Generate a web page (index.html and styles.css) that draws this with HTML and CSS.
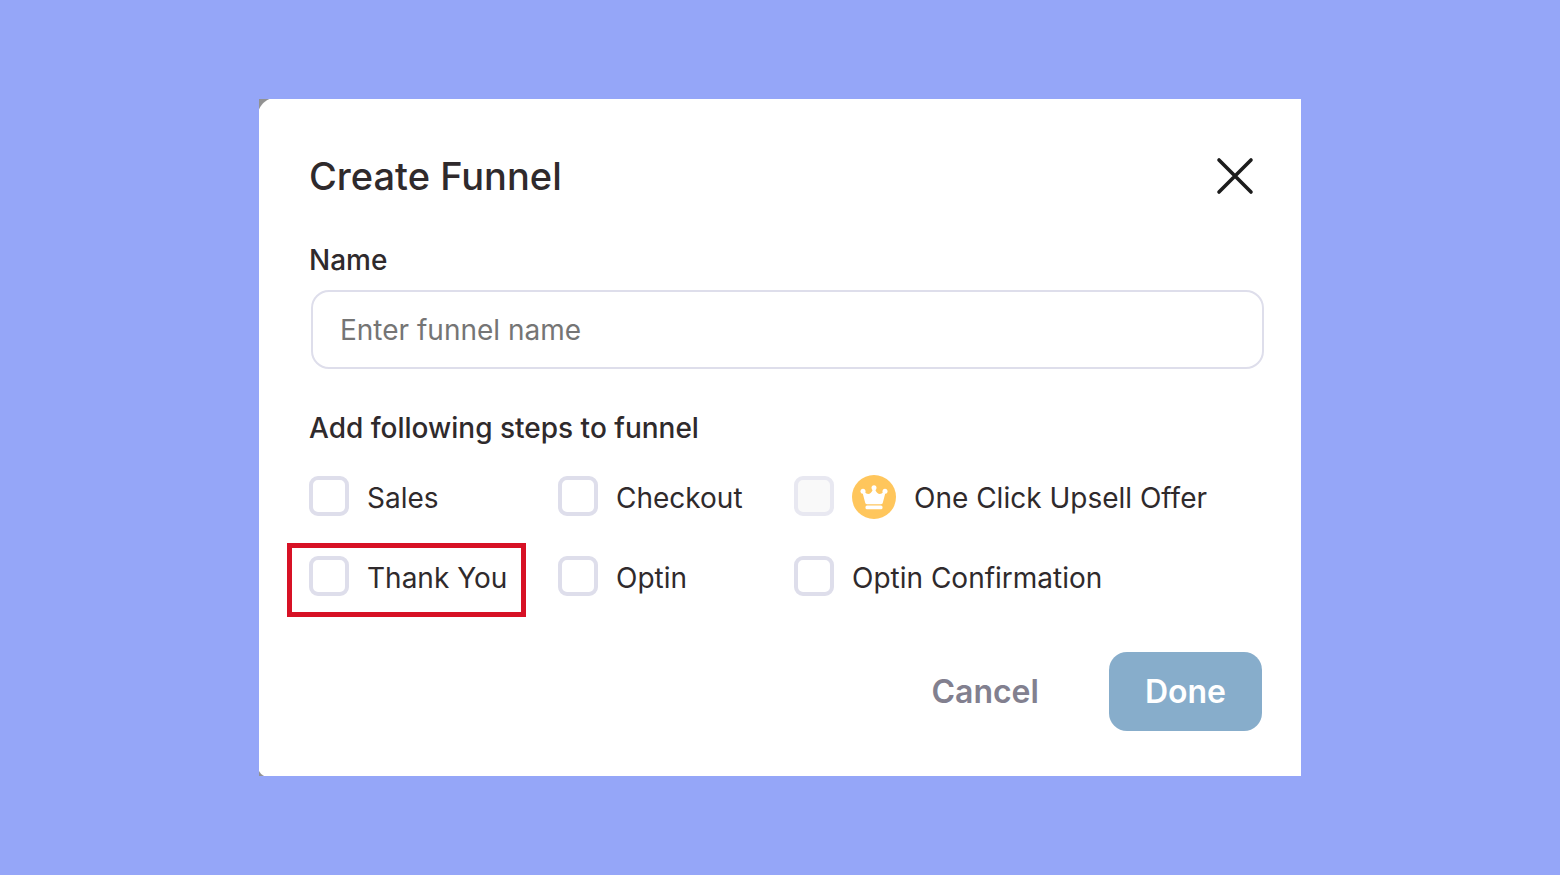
FILE: index.html
```html
<!DOCTYPE html>
<html lang="en">
<head>
  <meta charset="UTF-8" />
  <meta name="viewport" content="width=device-width, initial-scale=1.0" />
  <title>Create Funnel</title>
  <link rel="stylesheet" href="styles.css">
</head>
<body>
  <div class="backdrop">
    <form class="modal" role="dialog" aria-labelledby="modalTitle">
      <header class="modal-header">
        <h1 id="modalTitle">Create Funnel</h1>
        <button class="close" type="button" aria-label="Close">
          <svg width="38" height="38" viewBox="0 0 38 38" fill="none" stroke="currentColor" stroke-width="3.6" stroke-linecap="round">
            <path d="M3 3L35 35M35 3L3 35" />
          </svg>
        </button>
      </header>

      <label class="field-label" for="funnelName">Name</label>
      <input class="text-input" id="funnelName" type="text" placeholder="Enter funnel name">

      <fieldset class="steps">
        <legend class="field-label">Add following steps to funnel</legend>
        <div class="steps-grid">
          <label class="step"><input type="checkbox" name="sales">Sales</label>
          <label class="step"><input type="checkbox" name="checkout">Checkout</label>
          <label class="step">
            <input type="checkbox" name="upsell" disabled>
            <svg class="crown" width="44" height="44" viewBox="0 0 44 44">
              <circle cx="22" cy="22" r="22" fill="#ffc65c" />
              <g fill="#fff">
                <circle cx="11" cy="16.3" r="2.5" />
                <circle cx="22" cy="12.7" r="2.5" />
                <circle cx="33" cy="16.3" r="2.5" />
                <path d="M10.5 17.5L12.8 17C14.2 19.2 17 19.6 18.6 18C20 16.6 20.7 15.6 20.7 14H23.3C23.3 15.6 24 16.6 25.4 18C27 19.6 29.8 19.2 31.2 17L33.5 17.5L30.8 27.8C30.5 28.8 30 29.2 29 29.2H15C14 29.2 13.5 28.8 13.2 27.8Z" />
                <rect x="13.5" y="30.6" width="17" height="3.6" rx="1.5" />
              </g>
            </svg>
            One Click Upsell Offer
          </label>
          <label class="step highlighted"><input type="checkbox" name="thankyou">Thank You</label>
          <label class="step"><input type="checkbox" name="optin">Optin</label>
          <label class="step"><input type="checkbox" name="optinconfirmation">Optin Confirmation</label>
        </div>
      </fieldset>

      <footer class="modal-footer">
        <button class="btn btn-cancel" type="button">Cancel</button>
        <button class="btn btn-done" type="button">Done</button>
      </footer>
    </form>
  </div>
</body>
</html>
```
FILE: styles.css
```css
* {
  box-sizing: border-box;
}
body {
  margin: 0;
  font-family: Inter, "Liberation Sans", sans-serif;
  color: #2f2a2c;
  background: #95a6f8;
}
.backdrop {
  min-height: 100vh;
  display: flex;
  align-items: center;
  justify-content: center;
}
.modal {
  width: 100%;
  max-width: 1042px;
  padding: 53px 37px 45px 50px;
  /* grey shows behind the two rounded corners on the left */
  background:
    radial-gradient(circle at 100% 100%, #fff 19px, #929292 20px) 0 0 / 18px 18px no-repeat,
    radial-gradient(circle at 100% 0, #fff 12px, #929292 13px) 0 100% / 11px 11px no-repeat,
    #fff;
}
.modal-header {
  display: flex;
  align-items: center;
  justify-content: space-between;
  padding-right: 10px;
}
h1 {
  margin: 0;
  font-size: 38px;
  font-weight: 500;
  line-height: 48px;
}
.close {
  display: flex;
  padding: 0;
  border: none;
  background: none;
  color: #1c1c1c;
  cursor: pointer;
}
.field-label {
  display: block;
  padding: 0;
  font-size: 28px;
  font-weight: 500;
  line-height: 36px;
}
.modal-header + .field-label {
  margin-top: 42px;
}
.text-input {
  display: block;
  width: calc(100% - 2px);
  height: 79px;
  margin: 12px 0 0 2px;
  padding: 0 27px;
  border: 2px solid #dedeeb;
  border-radius: 18px;
  font: inherit;
  font-size: 28px;
  color: inherit;
}
.text-input::placeholder {
  color: #757575;
}
.steps {
  margin: 41px 0 0;
  padding: 0;
  border: none;
}
.steps-grid {
  display: grid;
  grid-template-columns: 249px 236px 1fr;
  row-gap: 36px;
  padding-top: 30px;
}
.step {
  position: relative;
  display: flex;
  align-items: center;
  justify-self: start;
  gap: 18px;
  height: 44px;
  font-size: 28px;
  white-space: nowrap;
}
.step input {
  appearance: none;
  flex: none;
  width: 40px;
  height: 40px;
  margin: 0 0 4px;
  border: 4px solid #dedeeb;
  border-radius: 9px;
  background: #fff;
}
.step input:disabled {
  border-color: #e8e8f1;
  background: #f9f9f9;
}
.step input:checked {
  background: #87adcb;
}
.crown {
  flex: none;
  margin-bottom: 2px;
}
.highlighted::after {
  content: "";
  position: absolute;
  inset: -13px -19px -17px -22px;
  border: 5px solid #d71125;
  pointer-events: none;
}
.modal-footer {
  display: flex;
  justify-content: flex-end;
  gap: 34px;
  margin-top: 52px;
  padding-right: 2px;
}
.btn {
  height: 79px;
  padding: 0 36px;
  border: none;
  border-radius: 18px;
  font: inherit;
  font-size: 32px;
  font-weight: 600;
  cursor: pointer;
}
.btn-cancel {
  background: none;
  color: #82808f;
}
.btn-done {
  background: #87adcb;
  color: #fff;
}
```
